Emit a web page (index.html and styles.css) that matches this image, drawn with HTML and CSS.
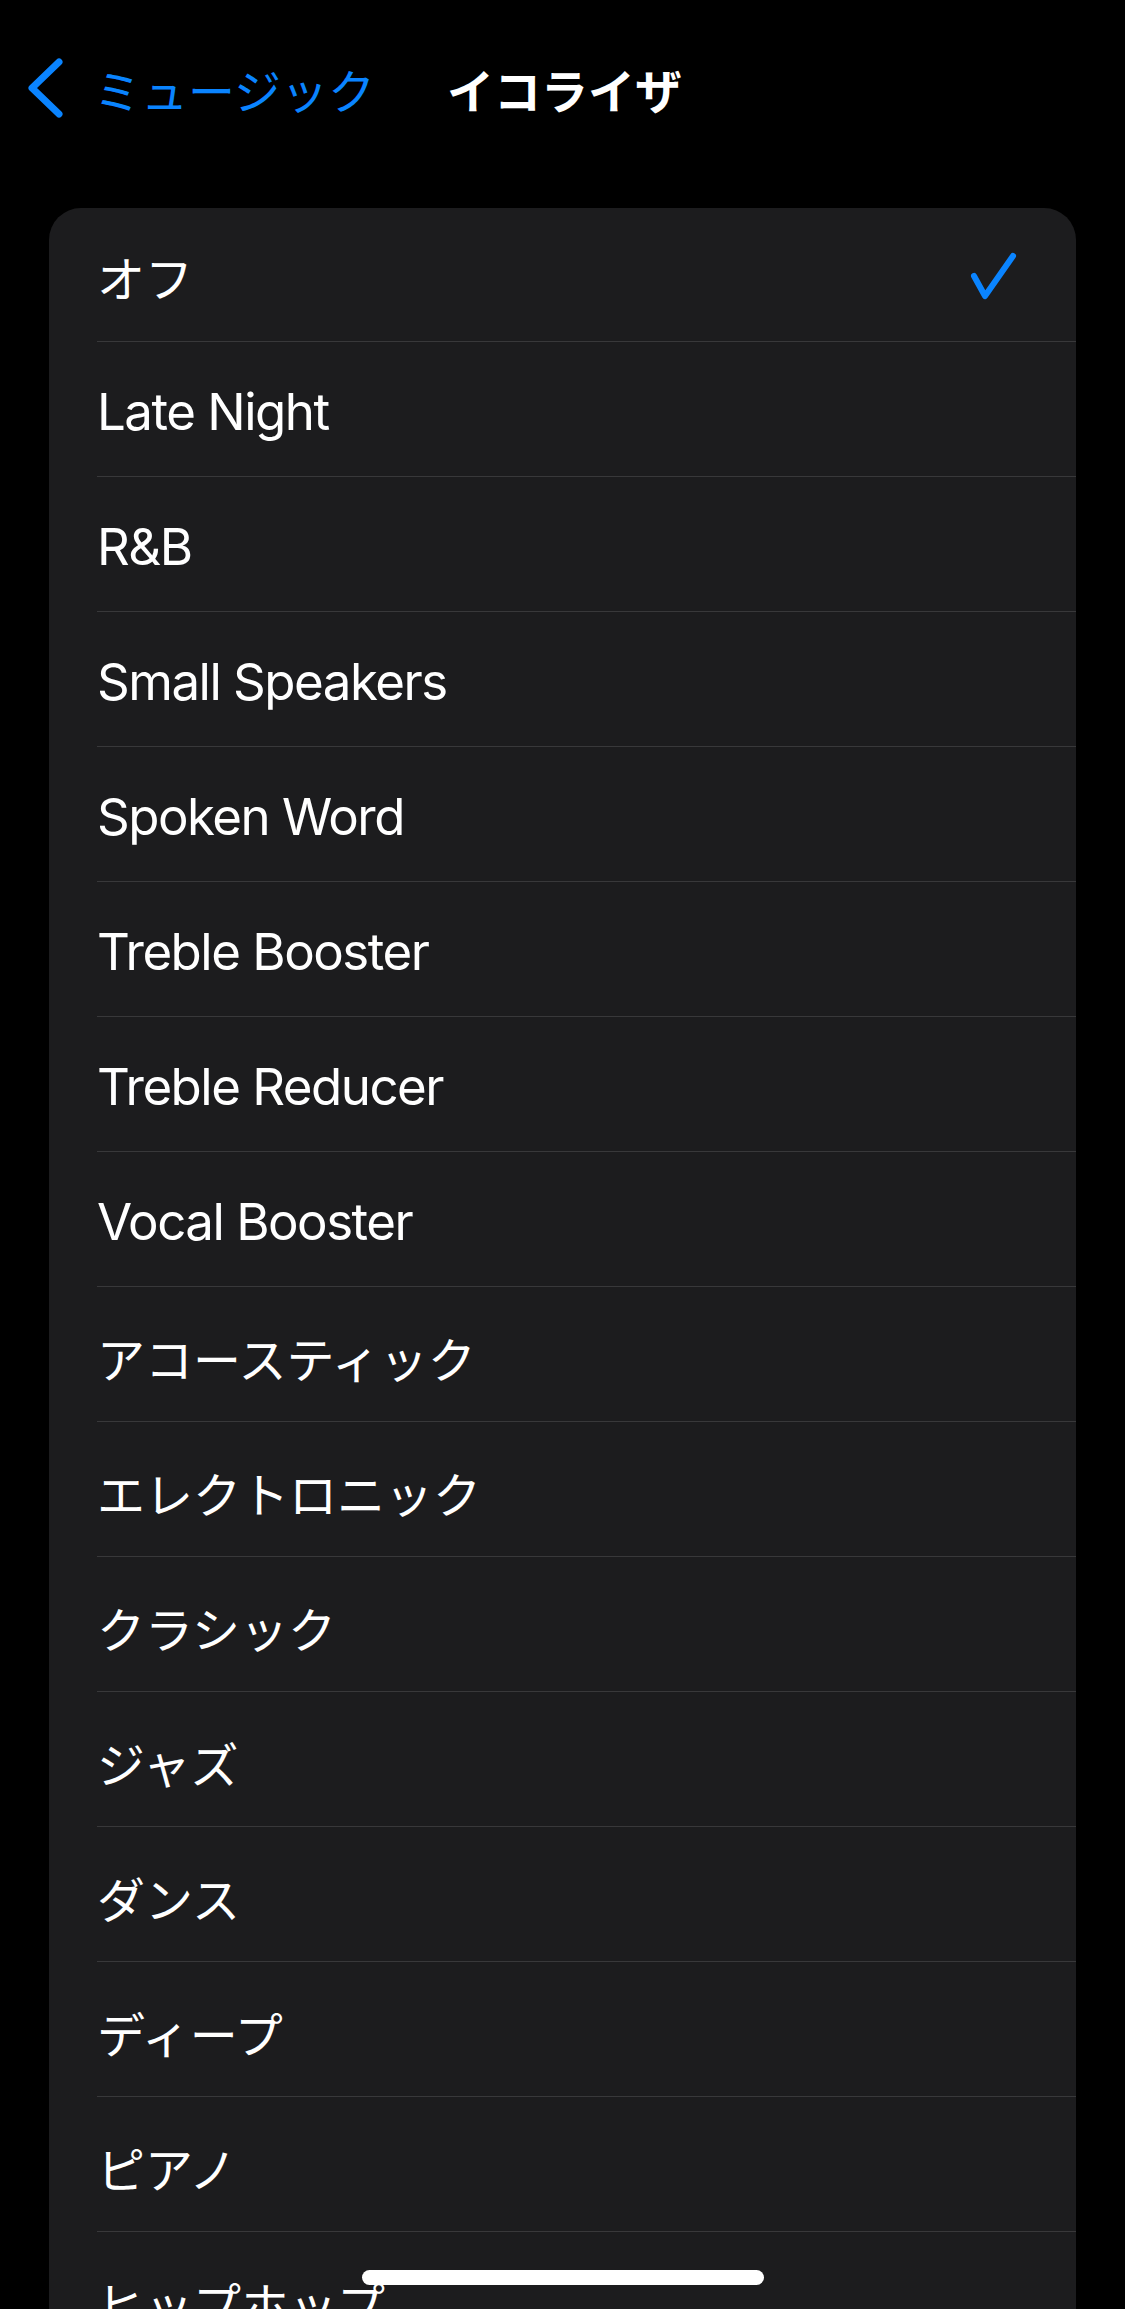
FILE: index.html
```html
<!DOCTYPE html>
<html lang="ja">
<head>
<meta charset="utf-8">
<title>イコライザ</title>
<link rel="stylesheet" href="styles.css">
</head>
<body>
<div class="screen">
  <header class="nav">
    <a class="back" href="#">
      <svg class="chevron" width="40" height="60" viewBox="0 0 40 60"><polyline points="33,4 6,30 33,56" fill="none" stroke="#0a84ff" stroke-width="7" stroke-linecap="round" stroke-linejoin="round"/></svg>
      <span class="back-label">ミュージック</span>
    </a>
    <h1 class="title">イコライザ</h1>
    <div class="spacer"></div>
  </header>

  <ul class="list">
    <li class="item"><div class="item-inner"><span class="label ja">オフ</span>
      <svg class="check" width="52" height="52" viewBox="0 0 52 52"><polyline points="6,26 17,46 45,6" fill="none" stroke="#0a84ff" stroke-width="6" stroke-linecap="round" stroke-linejoin="round"/></svg></div></li>
    <li class="item"><div class="item-inner"><span class="label">Late Night</span></div></li>
    <li class="item"><div class="item-inner"><span class="label">R&amp;B</span></div></li>
    <li class="item"><div class="item-inner"><span class="label">Small Speakers</span></div></li>
    <li class="item"><div class="item-inner"><span class="label">Spoken Word</span></div></li>
    <li class="item"><div class="item-inner"><span class="label">Treble Booster</span></div></li>
    <li class="item"><div class="item-inner"><span class="label">Treble Reducer</span></div></li>
    <li class="item"><div class="item-inner"><span class="label">Vocal Booster</span></div></li>
    <li class="item"><div class="item-inner"><span class="label ja">アコースティック</span></div></li>
    <li class="item"><div class="item-inner"><span class="label ja">エレクトロニック</span></div></li>
    <li class="item"><div class="item-inner"><span class="label ja">クラシック</span></div></li>
    <li class="item"><div class="item-inner"><span class="label ja">ジャズ</span></div></li>
    <li class="item"><div class="item-inner"><span class="label ja">ダンス</span></div></li>
    <li class="item"><div class="item-inner"><span class="label ja">ディープ</span></div></li>
    <li class="item"><div class="item-inner"><span class="label ja">ピアノ</span></div></li>
    <li class="item"><div class="item-inner"><span class="label ja">ヒップホップ</span></div></li>
    <li class="item"><div class="item-inner"><span class="label ja">ポップ</span></div></li>
    <li class="item"><div class="item-inner"><span class="label ja">ラウンジ</span></div></li>
  </ul>

  <div class="home-indicator"></div>
</div>
</body>
</html>
```

FILE: styles.css
```css
* { box-sizing: border-box; }

html, body {
  margin: 0;
  padding: 0;
  background: #000;
}

body {
  font-family: "Inter", "Noto Sans CJK JP", sans-serif;
  color: #fff;
}

.screen {
  position: relative;
  width: 1125px;
  height: 2309px;
  overflow: hidden;
  background: #000;
}

.nav {
  height: 176px;
  display: grid;
  grid-template-columns: 1fr auto 1fr;
  align-items: center;
  padding: 0 0 0 26px;
}

.back {
  display: flex;
  align-items: center;
  text-decoration: none;
  color: #0a84ff;
  gap: 28px;
  justify-self: start;
}

.chevron { display: block; }

.back-label {
  font-family: "Noto Sans CJK JP", sans-serif;
  font-size: 47px;
  line-height: 1;
  color: #0a84ff;
}

.title {
  margin: 0;
  font-family: "Noto Sans CJK JP", sans-serif;
  font-size: 47px;
  font-weight: 700;
  line-height: 1;
  color: #fff;
  text-align: center;
  padding-right: 22px;
}

.list {
  list-style: none;
  margin: 32px 49px 0;
  padding: 0;
  background: #1c1c1e;
  border-radius: 32px 32px 0 0;
}

.item {
  padding-left: 48px;
}

.item-inner {
  height: 135px;
  display: flex;
  align-items: center;
  justify-content: space-between;
  border-bottom: 1px solid #38383a;
  padding-right: 56px;
  padding-top: 5px;
}

.item:first-child .item-inner {
  height: 134px;
  padding-top: 2px;
}

.label {
  font-size: 51px;
  line-height: 1;
  letter-spacing: -1.5px;
}

.label.ja {
  font-family: "Noto Sans CJK JP", sans-serif;
  font-size: 48px;
  letter-spacing: 0;
}

.check { display: block; }

.home-indicator {
  position: absolute;
  left: 362px;
  bottom: 24px;
  width: 402px;
  height: 15px;
  border-radius: 8px;
  background: #fff;
}
```
